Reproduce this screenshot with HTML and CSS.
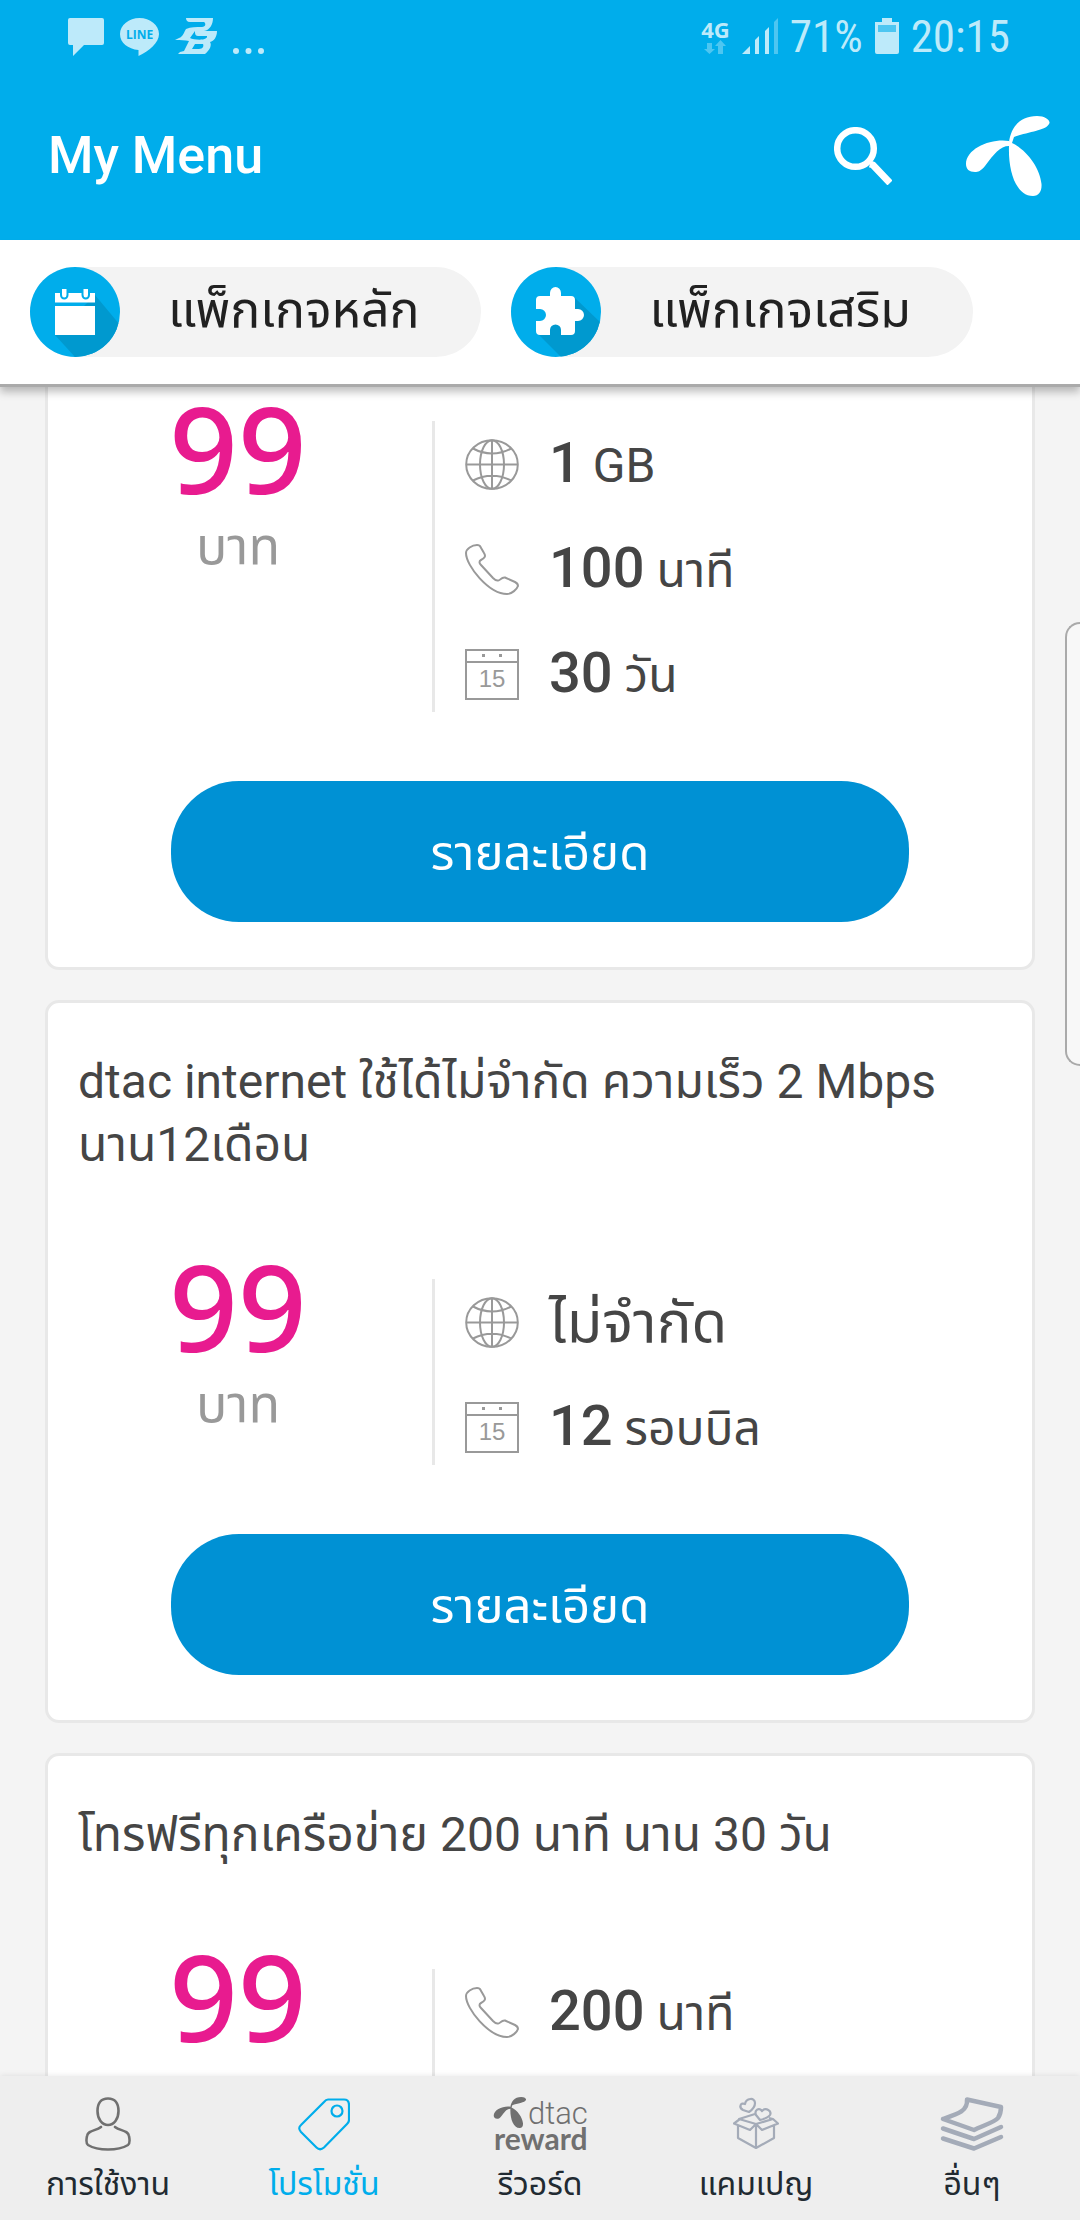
FILE: index.html
```html
<!DOCTYPE html>
<html lang="th">
<head>
<meta charset="utf-8">
<meta name="viewport" content="width=device-width, initial-scale=1">
<title>My Menu</title>
<link rel="stylesheet" href="styles.css">
</head>
<body>
<svg class="defs" aria-hidden="true">
  <symbol id="globe" viewBox="0 0 54 51"><g fill="none" stroke="currentColor" stroke-width="2"><ellipse cx="27" cy="25.5" rx="25.8" ry="24.3"/><ellipse cx="27" cy="25.5" rx="12" ry="24.3"/><path d="M27 1v49M1 25.5h52M8 9.500C20 16 34 16 46 9.500M8 41.500C20 35 34 35 46 41.500"/></g></symbol>
  <symbol id="phone" viewBox="0 0 54 51"><path fill="none" stroke="currentColor" stroke-width="2" stroke-linejoin="round" d="M12 1C7 1 1 5 1 9C1 22 24 50 42 50C47 50 52 45 53 42C53 40 52 39 50 38L40 33.500C36 33 35 37 33 36.500C31 37 30 36 28 34L16 21C14 19 14 17 16 16C20 14 21 12 19 9L15.500 3C15 1.500 14 1 12 1Z"/></symbol>
  <symbol id="calendar" viewBox="0 0 54 51"><path fill="none" stroke="currentColor" stroke-width="2" d="M1 1h52v49H1zM1 13h52"/><path fill="currentColor" d="M17 5h3v3h-3zM34 5h3v3h-3z"/><text x="27" y="38" text-anchor="middle" class="day">15</text></symbol>
  <symbol id="propeller" viewBox="0 0 84 80"><path fill="currentColor" d="M43 26C45 12 53 0 71 0C79 0 84 4 83.500 7C81 15 60 16 48 21L46 27C61 34 74 52 75.500 68C76 75 73 80 67 80C50 80 42 55 43 30C34 30 28 38 19 50C15 55 12 56 9 56C3 56 0 53 0 48C0 32 26 22 43 25Z"/></symbol>
</svg>

<div class="app">
  <header class="top">
    <div class="status">
      <div class="status-left">
        <svg width="36" height="38" viewBox="0 0 36 38"><path fill="currentColor" d="M2 0H34Q36 0 36 2V25Q36 27 34 27H16L5 38V27H2Q0 27 0 25V2Q0 0 2 0Z"/></svg>
        <svg width="39" height="38" viewBox="0 0 39 38"><path fill="currentColor" d="M19.500 0C30 0 39 7 39 16C39 25 29 33 18.500 38V32C8 31 0 25 0 16C0 7 9 0 19.500 0Z"/><text x="19.500" y="21" text-anchor="middle" class="line-word">LINE</text></svg>
        <svg width="42" height="36" viewBox="0 0 42 36"><path fill="currentColor" fill-rule="evenodd" d="M11 0H38C38 6 35 12 29 13H42C42 19 39 23 35 24C37 27 35 32 30 36H3L5 34L9 33L14 23C10 22 6 22 0 22L4 20C8 19 9 14 11 11C16 9 21 9 27 9C31 9 31 5 29 4H15C12 4 11 2 11 0ZM20 13L15 20C19 22 33 23 32 18H23C20 18 20 15 20 13ZM20 26L17 31H24C28 31 29 28 28 26Z"/></svg>
        <svg class="dots" width="31" height="6" viewBox="0 0 31 6"><g fill="currentColor"><circle cx="3" cy="3" r="3"/><circle cx="15.500" cy="3" r="3"/><circle cx="28" cy="3" r="3"/></g></svg>
      </div>
      <div class="status-right">
        <div class="network"><span>4G</span><svg width="22" height="14" viewBox="0 0 22 14"><path fill="currentColor" d="M3 3h5v6h3l-5.500 5L0 9h3zM14 14h5V6h3l-5.500-6L11 6h3z"/></svg></div>
        <svg width="36" height="36" viewBox="0 0 36 36"><path fill="currentColor" d="M0 36L8 28v8zM13 22l4-4v18h-4zM23 13l4-4v27h-4z"/><path fill="#4dc6f1" d="M32 4l4-4v36h-4z"/></svg>
        <span class="status-text">71%</span>
        <svg class="battery" width="24" height="36" viewBox="0 0 24 36"><path fill="currentColor" d="M7 0h10v4h7v30q0 2-2 2H2q-2 0-2-2V4h7z"/><path fill="#4dc6f1" d="M3 7h18v7H3z"/></svg>
        <span class="status-text">20:15</span>
      </div>
    </div>
    <div class="appbar">
      <h1>My Menu</h1>
      <button class="icon-button" aria-label="Search"><svg width="58" height="58" viewBox="0 0 58 58"><circle cx="21.500" cy="21.500" r="18.300" fill="none" stroke="currentColor" stroke-width="6.500"/><path stroke="currentColor" stroke-width="7" d="M36 37l3 1L56 56" fill="none"/></svg></button>
      <a class="brand" href="#" aria-label="dtac"><svg width="84" height="80"><use href="#propeller"/></svg></a>
    </div>
  </header>

  <nav class="chips">
    <a class="chip" href="#">
      <svg width="90" height="90" viewBox="0 0 90 90"><clipPath id="c1"><circle cx="45" cy="45" r="45"/></clipPath><g clip-path="url(#c1)"><path fill="#00adeb" d="M0 0h90v90H0z"/><path fill="#0099cf" d="M65 28l25 30v32H45L25 68z"/></g><path fill="#fff" d="M25 26h40v9.500H25zM25 39h40v29H25z"/><path fill="#fff" stroke="#00adeb" stroke-width="2" d="M31 21h6.500v7a3.200 3.500 0 0 1-6.500 0zM52.500 21H59v7a3.200 3.500 0 0 1-6.500 0z"/></svg>
      <span>แพ็กเกจหลัก</span>
    </a>
    <a class="chip" href="#">
      <svg width="90" height="90" viewBox="0 0 90 90"><clipPath id="c2"><circle cx="45" cy="45" r="45"/></clipPath><g clip-path="url(#c2)"><path fill="#00adeb" d="M0 0h90v90H0z"/><path fill="#0099cf" d="M63 30l27 26v34H50L27 67z"/></g><path fill="#fff" d="M29 29H39V26a5.500 6 0 0 1 11 0v3H60q4 0 4 4v9h3a6 6 0 0 1 0 12H64V64q0 4-4 4H50V63a5.500 5.500 0 0 0-11 0v5H29q-4 0-4-4V54h4a6 6 0 0 0 0-12H25V33q0-4 4-4z"/></svg>
      <span>แพ็กเกจเสริม</span>
    </a>
  </nav>

  <main class="list">
    <article class="card card-first">
      <div class="plan">
        <p class="price"><strong>99</strong><span>บาท</span></p>
        <ul class="features">
          <li><svg><use href="#globe"/></svg><p><b>1</b> GB</p></li>
          <li><svg><use href="#phone"/></svg><p><b>100</b> นาที</p></li>
          <li><svg><use href="#calendar"/></svg><p><b>30</b> วัน</p></li>
        </ul>
      </div>
      <button class="detail">รายละเอียด</button>
    </article>
    <article class="card">
      <h2>dtac internet ใช้ได้ไม่จำกัด ความเร็ว 2 Mbps<br>นาน12เดือน</h2>
      <div class="plan">
        <p class="price"><strong>99</strong><span>บาท</span></p>
        <ul class="features">
          <li><svg><use href="#globe"/></svg><p class="unlimited">ไม่จำกัด</p></li>
          <li><svg><use href="#calendar"/></svg><p><b>12</b> รอบบิล</p></li>
        </ul>
      </div>
      <button class="detail">รายละเอียด</button>
    </article>
    <article class="card card-last">
      <h2>โทรฟรีทุกเครือข่าย 200 นาที นาน 30 วัน</h2>
      <div class="plan">
        <p class="price"><strong>99</strong></p>
        <ul class="features">
          <li><svg><use href="#phone"/></svg><p><b>200</b> นาที</p></li>
        </ul>
      </div>
    </article>
  </main>

  <nav class="tabs">
    <a href="#"><svg width="46" height="54" viewBox="0 0 46 54" class="grey"><g fill="none" stroke="currentColor" stroke-width="2.600" stroke-linecap="round"><path d="M23 1.500C16 1.500 12.500 6 12.500 14C12.500 22 17 28 23 28C29 28 33.500 22 33.500 14C33.500 6 30 1.500 23 1.500Z"/><path d="M16 30C11 34 3 33 2 39C1 44 1.500 47 3 48C13 54 33 54 43 48C44.500 47 45 44 44 39C43 33 35 34 30 30"/></g></svg><span>การใช้งาน</span></a>
    <a href="#" class="active"><svg width="52" height="54" viewBox="0 0 52 54"><g fill="none" stroke="currentColor" stroke-width="2.200"><path d="M30 2.500H46Q51 2.500 51 8V23Q51 25 49 27L26 50.500Q22 54 18.500 50.500L3 35Q-.5 31 3 28L26 5Q28 2.500 30 2.500Z"/><circle cx="39" cy="14" r="5.500"/></g></svg><span>โปรโมชั่น</span></a>
    <a href="#"><svg width="94" height="54" viewBox="0 0 94 54" class="grey"><use href="#propeller" x="0" y="0" width="34" height="31"/><text x="35" y="27" class="logo-thin">dtac</text><text x="1" y="53" class="logo-bold">reward</text></svg><span>รีวอร์ด</span></a>
    <a href="#"><svg width="46" height="54" viewBox="0 0 46 54" class="pale"><g fill="none" stroke="currentColor" stroke-width="2.200" stroke-linejoin="round"><path d="M5 29V41L23 51L41 41V29M23 27V51M7 22L1 26.500L17 33L23 27L6 22L22 17M36 21L40 22L45 26.500L29 33L23 27L40 22"/><path d="M16 15L10 13C5 10 8 5 12 7C13 1 22 0 22 6C22 10 19 13 16 15Z"/><path d="M27 23L23 18C21 13 26 10 29 14C33 10 39 14 37 18C35 21 31 22 27 23Z"/></g></svg><span>แคมเปญ</span></a>
    <a href="#"><svg width="64" height="54" viewBox="0 0 64 54" class="pale"><g fill="none" stroke="currentColor" stroke-width="4.500" stroke-linejoin="round" stroke-linecap="round"><path d="M27 2.500L61 10C61 15 60 18 58 21C55 25 42 29 34 33L3 22C18 17 28 14 27 2.500Z"/><path d="M3 31.500L34 42L61 30M3 41.500L34 51.500L61 40"/></g></svg><span>อื่นๆ</span></a>
  </nav>
  <div class="edge-handle"></div>
</div>
</body>
</html>
```
FILE: styles.css
```css
* { box-sizing: border-box; }

body {
  margin: 0;
  font-family: "Noto Sans", "Noto Sans Thai", sans-serif;
  color: #454545;
}

h1, h2, p, ul { margin: 0; padding: 0; }
a { color: inherit; text-decoration: none; }
button { border: 0; padding: 0; font-family: inherit; color: #fff; cursor: pointer; }
svg { display: block; flex: none; }
.defs { position: absolute; width: 0; height: 0; }

.app {
  position: relative;
  display: flex;
  flex-direction: column;
  height: 100vh;
  overflow: hidden;
  background: #f4f4f4;
}

.top { flex: none; background: #00adeb; color: #fff; }

.status {
  display: flex;
  justify-content: space-between;
  height: 72px;
  padding: 18px 70px 0 68px;
  color: #bdeafa;
}
.status-left { display: flex; align-items: flex-start; gap: 16px; }
.dots { margin-top: 30px; }
.status-right { display: flex; align-items: flex-start; gap: 12px; }
.network {
  display: flex;
  flex-direction: column;
  align-items: center;
  font: bold 22px/22px "Open Sans", sans-serif;
}
.network svg { color: #4dc6f1; }
.status-text { font: 45px/38px "Roboto Condensed", "Liberation Sans Narrow", sans-serif; }
.line-word { font: bold 12px "Open Sans", sans-serif; fill: #00adeb; }

.appbar {
  display: flex;
  align-items: center;
  height: 168px;
  padding: 0 30px 0 48px;
}
.appbar h1 { flex: 1; font: 500 52px/64px Roboto, sans-serif; }
.icon-button { background: none; margin-right: 74px; }

.chips {
  position: relative;
  z-index: 1;
  flex: none;
  display: flex;
  gap: 30px;
  padding: 27px 30px;
  background: #fff;
  box-shadow: 0 3px 0 #aaa, 0 8px 8px rgba(0, 0, 0, .25);
}
.chip {
  display: flex;
  align-items: center;
  gap: 48px;
  height: 90px;
  padding-right: 62px;
  border-radius: 45px;
  background: #f3f3f3;
  color: #212121;
  font-size: 50px;
  white-space: nowrap;
}

.list {
  flex: 1;
  min-height: 0;
  overflow: hidden;
  display: flex;
  flex-direction: column;
  gap: 30px;
  padding: 0 45px;
}
.card {
  flex: none;
  padding: 47px 30px 45px;
  border: 3px solid #e8e8e8;
  border-radius: 14px;
  background: #fff;
}
.card-first { border-top: 0; border-radius: 0 0 14px 14px; padding-top: 37px; }
.card-last {
  flex: 1;
  display: flex;
  flex-direction: column;
  padding-bottom: 0;
  border-bottom: 0;
  border-radius: 14px 14px 0 0;
}
.card-last .plan { flex: 1; }
.card h2 {
  margin-bottom: 103px;
  font: 400 48px/63px Roboto, "Noto Sans Thai", sans-serif;
  white-space: nowrap;
}
.plan { display: grid; grid-template-columns: 354px 1fr; }
.price {
  display: flex;
  flex-direction: column;
  align-items: center;
  padding-right: 34px;
  margin-top: -21px;
}
.price strong { font-size: 120px; line-height: 96px; font-weight: 500; color: #e81b8f; }
.price span { margin-top: 12px; font-size: 52px; line-height: 72px; color: #999; }
.features {
  display: flex;
  flex-direction: column;
  gap: 45px;
  list-style: none;
  padding: 13px 0 8px 30px;
  border-left: 3px solid #e8e8e8;
}
.features li { display: flex; align-items: center; gap: 30px; height: 60px; }
.features svg { width: 54px; height: 51px; color: #999; }
.features p {
  font: 400 48px/60px Roboto, "Noto Sans Thai", sans-serif;
  white-space: nowrap;
}
.features b { font-size: 56px; font-weight: 500; }
.features .unlimited { font-size: 58px; }
.day { font: 24px "Liberation Sans", sans-serif; fill: currentColor; }
.detail {
  display: block;
  width: calc(100% - 186px);
  height: 141px;
  margin: 69px auto 0;
  padding-top: 6px;
  border-radius: 68px;
  background: #0091d4;
  font-size: 49px;
}

.tabs {
  flex: none;
  position: relative;
  display: grid;
  grid-template-columns: repeat(5, 1fr);
  height: 144px;
  padding-top: 21px;
  background: #eee;
  color: #212a31;
  box-shadow: 0 0 6px rgba(0, 0, 0, .1);
}
.tabs a {
  display: flex;
  flex-direction: column;
  align-items: center;
  gap: 8px;
  font-size: 32px;
  line-height: 48px;
}
.tabs .active { color: #00adeb; }
.grey { color: #707070; }
.pale { color: #a4abb8; }
.logo-thin { font: 300 31px Roboto, sans-serif; fill: currentColor; }
.logo-bold { font: bold 30px Lato, sans-serif; fill: currentColor; }

.edge-handle {
  position: absolute;
  right: 0;
  top: 622px;
  width: 15px;
  height: 444px;
  border: 2px solid #aaa;
  border-right: 0;
  border-radius: 18px 0 0 18px;
  background: #f8f8f8;
}
```
